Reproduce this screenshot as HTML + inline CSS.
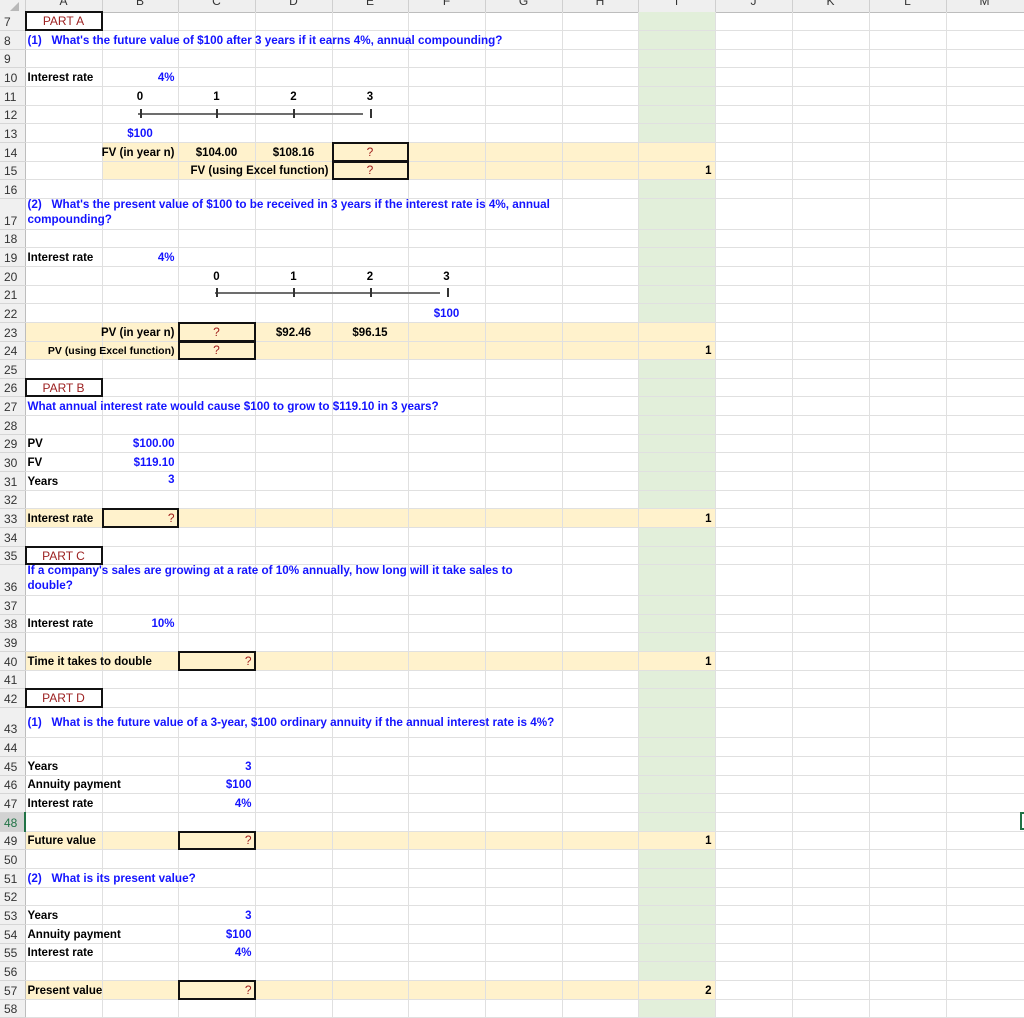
<!DOCTYPE html>
<html><head><meta charset="utf-8">
<style>
html,body{margin:0;padding:0;background:#fff;width:1024px;height:1018px;overflow:hidden}
#w{position:relative;width:1024px;height:1018px;overflow:hidden}
table{position:absolute;left:0;top:12px;border-collapse:collapse;table-layout:fixed;width:1024px}
td,th{padding:0;height:18.67px;border-right:1px solid #e0e0e0;border-bottom:1px solid #e0e0e0;position:relative;white-space:nowrap;overflow:visible;font:bold 11.5px "Liberation Sans",Arial,sans-serif;color:#000;box-sizing:border-box}
th{background:#f0f0f0;font-weight:normal;font-size:12px;color:#333;text-align:left;padding-left:4px;border-right:1px solid #bdbdbd;border-bottom:1px solid #d6d6d6;vertical-align:bottom;padding-bottom:1px}
td:nth-child(10){background:#e2efda}
tr.cb td:nth-child(n+3):nth-child(-n+10){background:#fff2cc}
tr.ca td:nth-child(n+2):nth-child(-n+10){background:#fff2cc}
tr.t td,tr.t th{height:30.5px}
.s{position:absolute;bottom:2px;z-index:3}
.l{left:2px}
.r{right:3px}
.c{left:0;right:0;text-align:center}
.b{color:#1414ff}
.qq{font-size:11.7px}
.q{color:#a0201c;font-weight:normal;font-size:12px}
.box{position:absolute;left:-1px;top:-1px;right:-1px;bottom:-1px;border:2px solid #111;z-index:2}
.part{position:absolute;left:-1px;top:-1px;right:-1px;bottom:-1px;border:2px solid #111;background:#fff;text-align:center;color:#9c2020;font:12px "Liberation Sans",Arial,sans-serif;line-height:16px;z-index:2}
.hdr{position:absolute;left:0;top:0;width:1024px;height:12px;background:#efefef;border-bottom:1px solid #bdbdbd;overflow:hidden;font:12px "Liberation Sans",Arial,sans-serif;color:#333}
.hdr span{position:absolute;top:-6px;text-align:center}
.hdr i{position:absolute;top:0;width:1px;height:12px;background:#cfcfcf}
.ln{position:absolute;height:1.5px;background:#6d6d6d;z-index:3}
.tk{position:absolute;width:1.5px;height:9px;background:#333;z-index:3}
</style></head><body><div id="w">
<div class="hdr">
<span style="left:25px;width:77px">A</span><span style="left:102px;width:76px">B</span><span style="left:178px;width:77px">C</span><span style="left:255px;width:77px">D</span><span style="left:332px;width:76px">E</span><span style="left:408px;width:77px">F</span><span style="left:485px;width:77px">G</span><span style="left:562px;width:76px">H</span><span style="left:638px;width:77px">I</span><span style="left:715px;width:77px">J</span><span style="left:792px;width:77px">K</span><span style="left:869px;width:77px">L</span><span style="left:946px;width:77px">M</span>
<i style="left:25px"></i><i style="left:102px"></i><i style="left:178px"></i><i style="left:255px"></i><i style="left:332px"></i><i style="left:408px"></i><i style="left:485px"></i><i style="left:562px"></i><i style="left:638px"></i><i style="left:715px"></i><i style="left:792px"></i><i style="left:869px"></i><i style="left:946px"></i>
<div style="position:absolute;left:10px;top:2px;width:0;height:0;border-left:9px solid transparent;border-bottom:9px solid #b8b8b8"></div>
</div>
<table>
<colgroup><col style="width:25px"><col style="width:77px"><col style="width:76px"><col style="width:77px"><col style="width:77px"><col style="width:76px"><col style="width:77px"><col style="width:77px"><col style="width:76px"><col style="width:77px"><col style="width:77px"><col style="width:77px"><col style="width:77px"><col style="width:78px"></colgroup>
<tr><th>7</th><td><div class="part">PART A</div></td><td></td><td></td><td></td><td></td><td></td><td></td><td></td><td></td><td></td><td></td><td></td><td></td></tr>
<tr><th>8</th><td><span class="s l b qq">(1)&nbsp;&nbsp;&nbsp;What's the future value of $100 after 3 years if it earns 4%, annual compounding?</span></td><td></td><td></td><td></td><td></td><td></td><td></td><td></td><td></td><td></td><td></td><td></td><td></td></tr>
<tr><th>9</th><td></td><td></td><td></td><td></td><td></td><td></td><td></td><td></td><td></td><td></td><td></td><td></td><td></td></tr>
<tr><th>10</th><td><span class="s l">Interest rate</span></td><td><span class="s r b">4%</span></td><td></td><td></td><td></td><td></td><td></td><td></td><td></td><td></td><td></td><td></td><td></td></tr>
<tr><th>11</th><td></td><td><span class="s c">0</span></td><td><span class="s c">1</span></td><td><span class="s c">2</span></td><td><span class="s c">3</span></td><td></td><td></td><td></td><td></td><td></td><td></td><td></td><td></td></tr>
<tr><th>12</th><td></td><td></td><td></td><td></td><td></td><td></td><td></td><td></td><td></td><td></td><td></td><td></td><td></td></tr>
<tr><th>13</th><td></td><td><span class="s c b">$100</span></td><td></td><td></td><td></td><td></td><td></td><td></td><td></td><td></td><td></td><td></td><td></td></tr>
<tr class="cb"><th>14</th><td></td><td><span class="s r">FV (in year n)</span></td><td><span class="s c">$104.00</span></td><td><span class="s c">$108.16</span></td><td><div class="box"></div><span class="s c q">?</span></td><td></td><td></td><td></td><td></td><td></td><td></td><td></td><td></td></tr>
<tr class="cb"><th>15</th><td></td><td></td><td></td><td><span class="s r">FV (using Excel function)</span></td><td><div class="box"></div><span class="s c q">?</span></td><td></td><td></td><td></td><td><span class="s r">1</span></td><td></td><td></td><td></td><td></td></tr>
<tr><th>16</th><td></td><td></td><td></td><td></td><td></td><td></td><td></td><td></td><td></td><td></td><td></td><td></td><td></td></tr>
<tr class="t"><th>17</th><td><span class="s l b qq" style="line-height:15px">(2)&nbsp;&nbsp;&nbsp;What's the present value of $100 to be received in 3 years if the interest rate is 4%, annual<br>compounding?</span></td><td></td><td></td><td></td><td></td><td></td><td></td><td></td><td></td><td></td><td></td><td></td><td></td></tr>
<tr><th>18</th><td></td><td></td><td></td><td></td><td></td><td></td><td></td><td></td><td></td><td></td><td></td><td></td><td></td></tr>
<tr><th>19</th><td><span class="s l">Interest rate</span></td><td><span class="s r b">4%</span></td><td></td><td></td><td></td><td></td><td></td><td></td><td></td><td></td><td></td><td></td><td></td></tr>
<tr><th>20</th><td></td><td></td><td><span class="s c">0</span></td><td><span class="s c">1</span></td><td><span class="s c">2</span></td><td><span class="s c">3</span></td><td></td><td></td><td></td><td></td><td></td><td></td><td></td></tr>
<tr><th>21</th><td></td><td></td><td></td><td></td><td></td><td></td><td></td><td></td><td></td><td></td><td></td><td></td><td></td></tr>
<tr><th>22</th><td></td><td></td><td></td><td></td><td></td><td><span class="s c b">$100</span></td><td></td><td></td><td></td><td></td><td></td><td></td><td></td></tr>
<tr class="ca"><th>23</th><td></td><td><span class="s r">PV (in year n)</span></td><td><div class="box"></div><span class="s c q">?</span></td><td><span class="s c">$92.46</span></td><td><span class="s c">$96.15</span></td><td></td><td></td><td></td><td></td><td></td><td></td><td></td><td></td></tr>
<tr class="ca"><th>24</th><td></td><td><span class="s r" style="font-size:10.5px">PV (using Excel function)</span></td><td><div class="box"></div><span class="s c q">?</span></td><td></td><td></td><td></td><td></td><td></td><td><span class="s r">1</span></td><td></td><td></td><td></td><td></td></tr>
<tr><th>25</th><td></td><td></td><td></td><td></td><td></td><td></td><td></td><td></td><td></td><td></td><td></td><td></td><td></td></tr>
<tr><th>26</th><td><div class="part">PART B</div></td><td></td><td></td><td></td><td></td><td></td><td></td><td></td><td></td><td></td><td></td><td></td><td></td></tr>
<tr><th>27</th><td><span class="s l b qq">What annual interest rate would cause $100 to grow to $119.10 in 3 years?</span></td><td></td><td></td><td></td><td></td><td></td><td></td><td></td><td></td><td></td><td></td><td></td><td></td></tr>
<tr><th>28</th><td></td><td></td><td></td><td></td><td></td><td></td><td></td><td></td><td></td><td></td><td></td><td></td><td></td></tr>
<tr><th>29</th><td><span class="s l">PV</span></td><td><span class="s r b">$100.00</span></td><td></td><td></td><td></td><td></td><td></td><td></td><td></td><td></td><td></td><td></td><td></td></tr>
<tr><th>30</th><td><span class="s l">FV</span></td><td><span class="s r b">$119.10</span></td><td></td><td></td><td></td><td></td><td></td><td></td><td></td><td></td><td></td><td></td><td></td></tr>
<tr><th>31</th><td><span class="s l">Years</span></td><td><span class="s r b" style="bottom:4px">3</span></td><td></td><td></td><td></td><td></td><td></td><td></td><td></td><td></td><td></td><td></td><td></td></tr>
<tr><th>32</th><td></td><td></td><td></td><td></td><td></td><td></td><td></td><td></td><td></td><td></td><td></td><td></td><td></td></tr>
<tr class="ca"><th>33</th><td><span class="s l">Interest rate</span></td><td><div class="box"></div><span class="s r q">?</span></td><td></td><td></td><td></td><td></td><td></td><td></td><td><span class="s r">1</span></td><td></td><td></td><td></td><td></td></tr>
<tr><th>34</th><td></td><td></td><td></td><td></td><td></td><td></td><td></td><td></td><td></td><td></td><td></td><td></td><td></td></tr>
<tr><th>35</th><td><div class="part">PART C</div></td><td></td><td></td><td></td><td></td><td></td><td></td><td></td><td></td><td></td><td></td><td></td><td></td></tr>
<tr class="t"><th>36</th><td><span class="s l b qq" style="line-height:15px">If a company's sales are growing at a rate of 10% annually, how long will it take sales to<br>double?</span></td><td></td><td></td><td></td><td></td><td></td><td></td><td></td><td></td><td></td><td></td><td></td><td></td></tr>
<tr><th>37</th><td></td><td></td><td></td><td></td><td></td><td></td><td></td><td></td><td></td><td></td><td></td><td></td><td></td></tr>
<tr><th>38</th><td><span class="s l">Interest rate</span></td><td><span class="s r b">10%</span></td><td></td><td></td><td></td><td></td><td></td><td></td><td></td><td></td><td></td><td></td><td></td></tr>
<tr><th>39</th><td></td><td></td><td></td><td></td><td></td><td></td><td></td><td></td><td></td><td></td><td></td><td></td><td></td></tr>
<tr class="ca"><th>40</th><td><span class="s l">Time it takes to double</span></td><td></td><td><div class="box"></div><span class="s r q">?</span></td><td></td><td></td><td></td><td></td><td></td><td><span class="s r">1</span></td><td></td><td></td><td></td><td></td></tr>
<tr><th>41</th><td></td><td></td><td></td><td></td><td></td><td></td><td></td><td></td><td></td><td></td><td></td><td></td><td></td></tr>
<tr><th>42</th><td><div class="part">PART D</div></td><td></td><td></td><td></td><td></td><td></td><td></td><td></td><td></td><td></td><td></td><td></td><td></td></tr>
<tr class="t"><th>43</th><td><span class="s l b qq" style="bottom:8px">(1)&nbsp;&nbsp;&nbsp;What is the future value of a 3-year, $100 ordinary annuity if the annual interest rate is 4%?</span></td><td></td><td></td><td></td><td></td><td></td><td></td><td></td><td></td><td></td><td></td><td></td><td></td></tr>
<tr><th>44</th><td></td><td></td><td></td><td></td><td></td><td></td><td></td><td></td><td></td><td></td><td></td><td></td><td></td></tr>
<tr><th>45</th><td><span class="s l">Years</span></td><td></td><td><span class="s r b">3</span></td><td></td><td></td><td></td><td></td><td></td><td></td><td></td><td></td><td></td><td></td></tr>
<tr><th>46</th><td><span class="s l">Annuity payment</span></td><td></td><td><span class="s r b">$100</span></td><td></td><td></td><td></td><td></td><td></td><td></td><td></td><td></td><td></td><td></td></tr>
<tr><th>47</th><td><span class="s l">Interest rate</span></td><td></td><td><span class="s r b">4%</span></td><td></td><td></td><td></td><td></td><td></td><td></td><td></td><td></td><td></td><td></td></tr>
<tr><th style="background:#d2d2d2;color:#217346;border-right:2px solid #217346">48</th><td></td><td></td><td></td><td></td><td></td><td></td><td></td><td></td><td></td><td></td><td></td><td></td><td><div style="position:absolute;left:73px;top:-1px;width:8px;height:18px;border:2px solid #217346;box-sizing:border-box"></div></td></tr>
<tr class="ca"><th>49</th><td><span class="s l">Future value</span></td><td></td><td><div class="box"></div><span class="s r q">?</span></td><td></td><td></td><td></td><td></td><td></td><td><span class="s r">1</span></td><td></td><td></td><td></td><td></td></tr>
<tr><th>50</th><td></td><td></td><td></td><td></td><td></td><td></td><td></td><td></td><td></td><td></td><td></td><td></td><td></td></tr>
<tr><th>51</th><td><span class="s l b qq">(2)&nbsp;&nbsp;&nbsp;What is its present value?</span></td><td></td><td></td><td></td><td></td><td></td><td></td><td></td><td></td><td></td><td></td><td></td><td></td></tr>
<tr><th>52</th><td></td><td></td><td></td><td></td><td></td><td></td><td></td><td></td><td></td><td></td><td></td><td></td><td></td></tr>
<tr><th>53</th><td><span class="s l">Years</span></td><td></td><td><span class="s r b">3</span></td><td></td><td></td><td></td><td></td><td></td><td></td><td></td><td></td><td></td><td></td></tr>
<tr><th>54</th><td><span class="s l">Annuity payment</span></td><td></td><td><span class="s r b">$100</span></td><td></td><td></td><td></td><td></td><td></td><td></td><td></td><td></td><td></td><td></td></tr>
<tr><th>55</th><td><span class="s l">Interest rate</span></td><td></td><td><span class="s r b">4%</span></td><td></td><td></td><td></td><td></td><td></td><td></td><td></td><td></td><td></td><td></td></tr>
<tr><th>56</th><td></td><td></td><td></td><td></td><td></td><td></td><td></td><td></td><td></td><td></td><td></td><td></td><td></td></tr>
<tr class="ca"><th>57</th><td><span class="s l">Present value</span></td><td></td><td><div class="box"></div><span class="s r q">?</span></td><td></td><td></td><td></td><td></td><td></td><td><span class="s r">2</span></td><td></td><td></td><td></td><td></td></tr>
<tr><th>58</th><td></td><td></td><td></td><td></td><td></td><td></td><td></td><td></td><td></td><td></td><td></td><td></td><td></td></tr>
</table>
<div class="ln" style="left:138px;top:113px;width:225px"></div>
<div class="tk" style="left:140px;top:109px"></div>
<div class="tk" style="left:216px;top:109px"></div>
<div class="tk" style="left:293px;top:109px"></div>
<div class="tk" style="left:370px;top:109px"></div>
<div class="ln" style="left:215px;top:292px;width:225px"></div>
<div class="tk" style="left:216px;top:288px"></div>
<div class="tk" style="left:293px;top:288px"></div>
<div class="tk" style="left:370px;top:288px"></div>
<div class="tk" style="left:447px;top:288px"></div>
</div></body></html>
